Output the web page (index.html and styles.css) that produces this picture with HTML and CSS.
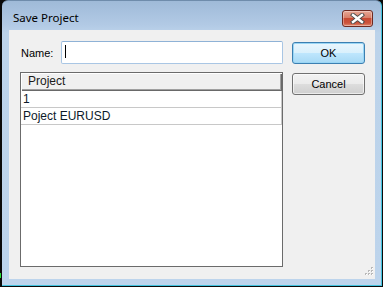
FILE: index.html
```html
<!DOCTYPE html>
<html>
<head>
<meta charset="utf-8">
<link rel="stylesheet" href="styles.css">
</head>
<body>
<div class="desk-mark"></div>
<div class="window">
  <div class="titlebar">
    <span class="title">Save Project</span>
    <div class="close">
      <svg width="15" height="11" viewBox="0 0 15 11">
        <path d="M3 2 L12 9 M12 2 L3 9" stroke="#4a4a4a" stroke-width="4.2" stroke-linecap="square" fill="none"/>
        <path d="M3 2 L12 9 M12 2 L3 9" stroke="#ffffff" stroke-width="2.4" stroke-linecap="square" fill="none"/>
      </svg>
    </div>
  </div>
  <div class="client">
    <div class="main">
      <div class="name-row">
        <span class="label">Name:</span>
        <div class="input"><span class="caret"></span></div>
      </div>
      <div class="list">
        <div class="list-header"><div class="col">Project</div></div>
        <div class="row"><div class="cell">1</div></div>
        <div class="row"><div class="cell">Poject EURUSD</div></div>
        <div class="row-fill"></div>
      </div>
    </div>
    <div class="buttons">
      <div class="btn default">OK</div>
      <div class="btn">Cancel</div>
    </div>
    <svg class="grip" width="12" height="12" viewBox="0 0 12 12">
      <rect x="9" y="2" width="2" height="2" fill="#b8b8b8"/>
      <rect x="10" y="3" width="1" height="1" fill="#ffffff"/>
      <rect x="6" y="5" width="2" height="2" fill="#b8b8b8"/>
      <rect x="7" y="6" width="1" height="1" fill="#ffffff"/>
      <rect x="9" y="5" width="2" height="2" fill="#b8b8b8"/>
      <rect x="10" y="6" width="1" height="1" fill="#ffffff"/>
      <rect x="3" y="8" width="2" height="2" fill="#b8b8b8"/>
      <rect x="4" y="9" width="1" height="1" fill="#ffffff"/>
      <rect x="6" y="8" width="2" height="2" fill="#b8b8b8"/>
      <rect x="7" y="9" width="1" height="1" fill="#ffffff"/>
      <rect x="9" y="8" width="2" height="2" fill="#b8b8b8"/>
      <rect x="10" y="9" width="1" height="1" fill="#ffffff"/>
    </svg>
  </div>
</div>
</body>
</html>
```

FILE: styles.css
```css
html, body {
  margin: 0;
  padding: 0;
  background: #0a0a0a;
  width: 383px;
  height: 287px;
  overflow: hidden;
}

.desk-mark {
  position: absolute;
  left: 0;
  top: 273px;
  width: 1px;
  height: 5px;
  background: #22e033;
}

.window {
  margin-left: 2px;
  width: 380px;
  height: 286px;
  box-sizing: border-box;
  border-top: 1px solid #6f8cab;
  border-right: 1px solid #42c3df;
  border-bottom: 1px solid #42c3df;
  border-radius: 6px 6px 0 0;
  background: linear-gradient(#9fbad8 0px, #b2cae5 24px, #bcd3ea 32px, #bdd4ec 100%);
  display: flex;
  flex-direction: column;
}

.titlebar {
  height: 29px;
  display: flex;
  align-items: flex-start;
  justify-content: space-between;
  padding-left: 11px;
  padding-right: 8px;
}

.title {
  font-family: "Noto Sans", "Open Sans", sans-serif;
  font-size: 11.5px;
  line-height: 16px;
  color: #000;
  margin-top: 9px;
}

.close {
  margin-top: 9px;
  width: 31px;
  height: 17px;
  box-sizing: border-box;
  border: 1px solid #6e2a22;
  border-radius: 3px;
  background: linear-gradient(#e7a795 0%, #d87f6a 45%, #c74a33 50%, #cc533b 80%, #e08a6f 100%);
  box-shadow: inset 0 0 0 1px rgba(255,255,255,0.35);
  display: flex;
  align-items: center;
  justify-content: center;
}

.close svg { display: block; }

.client {
  flex: 1;
  margin: 0 6px 6px 7px;
  background: #f0f0f0;
  position: relative;
  display: flex;
  align-items: flex-start;
}

.main {
  padding: 11px 0 0 11px;
  width: 263px;
}

.name-row {
  display: flex;
  align-items: center;
  height: 23px;
}

.label {
  width: 41px;
  padding-left: 1px;
  box-sizing: border-box;
  font-family: "Liberation Sans", Arial, sans-serif;
  font-size: 11px;
  color: #000;
}

.input {
  flex: 1;
  height: 23px;
  box-sizing: border-box;
  border: 1px solid #a9c6e4;
  border-top-color: #8fb2d6;
  border-radius: 2px;
  background: #fff;
  position: relative;
}

.caret {
  position: absolute;
  left: 3px;
  top: 3px;
  width: 1px;
  height: 13px;
  background: #000;
}

.list {
  margin-top: 8px;
  height: 195px;
  box-sizing: border-box;
  border: 1px solid #6b6b6b;
  background: #fff;
  display: flex;
  flex-direction: column;
  font-family: "Liberation Sans", Arial, sans-serif;
  font-size: 12px;
  color: #000;
}

.list-header {
  height: 18px;
  background: #f0f0f0;
  box-shadow: inset 1px 1px 0 #ffffff, inset -1px -1px 0 #696969, inset -2px -2px 0 #a0a0a0;
}

.col {
  padding-left: 7px;
  line-height: 17px;
  color: #1a1a1a;
}

.row {
  height: 17px;
  box-sizing: border-box;
  border-bottom: 1px solid #c8c8c8;
  border-right: 1px solid #c8c8c8;
}

.cell {
  padding-left: 2px;
  line-height: 16px;
  color: #0c1a2a;
}

.row-fill {
  flex: 1;
}

.buttons {
  margin-left: 9px;
  padding-top: 12px;
  display: flex;
  flex-direction: column;
  gap: 9px;
}

.btn {
  width: 73px;
  height: 22px;
  box-sizing: border-box;
  border: 1px solid #707070;
  border-radius: 3px;
  background: linear-gradient(#f2f2f2 0%, #ebebeb 50%, #dddddd 51%, #cfcfcf 100%);
  box-shadow: inset 0 0 0 1px rgba(255,255,255,0.6);
  font-family: "Liberation Sans", Arial, sans-serif;
  font-size: 11px;
  line-height: 20px;
  text-align: center;
  color: #000;
}

.btn.default {
  border-color: #3c7fb1;
  background: linear-gradient(#eaf6fd 0%, #d9f0fc 50%, #bee6fd 51%, #a7d9f5 100%);
  box-shadow: inset 0 0 0 1px #9ad6f5;
}

.grip {
  position: absolute;
  right: 1px;
  bottom: 2px;
  display: block;
}
```
